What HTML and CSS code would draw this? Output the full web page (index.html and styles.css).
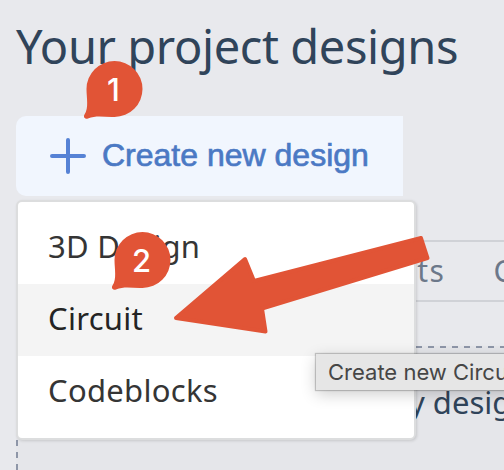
FILE: index.html
```
<!DOCTYPE html>
<html lang="en">
<head>
<meta charset="utf-8">
<title>Your project designs</title>
<link rel="stylesheet" href="styles.css">
</head>
<body>
<main class="page">
  <h1 class="title">Your project designs</h1>
  <button class="create">
    <svg class="plus" viewBox="0 0 36 36"><path d="M18 2v32M2 18h32"/></svg>
    <span>Create new design</span>
  </button>
  <nav class="tabs"><span>Circuits</span><span>Codeblocks</span></nav>
  <section class="empty"><p>my designs</p></section>
  <ul class="menu">
    <li>3D Design</li>
    <li class="active">Circuit</li>
    <li>Codeblocks</li>
  </ul>
  <div class="tooltip">Create new Circuit design</div>
  <svg class="arrow" viewBox="0 0 504 470"><path d="M176 318 L245 259 L254 281 L421 238 L427.500 258 L262 308.500 L265.500 331.500 Z"/></svg>
  <div class="marker first"><svg viewBox="0 0 60 60"><path d="M31.500 1A28 28 0 1 1 31.500 57C22 57.500 14 55 5 58.500C2 59.500 0 57 1.500 54.500C6 48 3.500 38 3.500 29A28 28 0 0 1 31.500 1Z"/></svg><span>1</span></div>
  <div class="marker second"><svg viewBox="0 0 60 60"><path d="M31.500 1A28 28 0 1 1 31.500 57C22 57.500 14 55 5 58.500C2 59.500 0 57 1.500 54.500C6 48 3.500 38 3.500 29A28 28 0 0 1 31.500 1Z"/></svg><span>2</span></div>
</main>
</body>
</html>
```
FILE: styles.css
```
* { box-sizing: border-box; }
body { margin: 0; font-family: "Noto Sans", sans-serif; }
.page {
  position: relative;
  width: 504px;
  height: 470px;
  padding: 15px 0 0 16px;
  overflow: hidden;
  background: #e8e9ed;
}
.title {
  height: 64px;
  margin: 0 0 37px;
  font-size: 47px;
  line-height: 62px;
  font-weight: 400;
  letter-spacing: -0.4px;
  white-space: nowrap;
  color: #30445a;
}
.create {
  display: flex;
  align-items: center;
  gap: 16px;
  width: 387px;
  height: 80px;
  padding: 0 0 2px 34px;
  border: 0;
  border-radius: 10px 0 0 10px;
  background: #f1f6fe;
  color: #4b79c4;
  font: 32px/40px "Liberation Sans", sans-serif;
  -webkit-text-stroke: 0.7px #4b79c4;
  white-space: nowrap;
}
.plus { width: 36px; height: 36px; flex: none; margin-top: 2px; }
.plus path { fill: none; stroke: #5682d5; stroke-width: 4; stroke-linecap: round; }
.tabs {
  display: flex;
  gap: 48px;
  height: 62px;
  margin-top: 44px;
  padding-left: 313px;
  border-top: 2px solid #d0d2d7;
  border-bottom: 2px solid #d0d2d7;
  font-size: 30px;
  line-height: 58px;
  letter-spacing: 1.5px;
  color: #6c788a;
}
.empty {
  width: 600px;
  height: 150px;
  margin-top: 44px;
  padding: 34px 0 0 364px;
  background:
    repeating-linear-gradient(90deg, #8e96a8 0 6px, transparent 6px 12px) 4px 0 / 100% 2px no-repeat,
    repeating-linear-gradient(180deg, #8e96a8 0 6px, transparent 6px 12px) 0 -2px / 2px 100% no-repeat,
    #e5e6ea;
}
.empty p { margin: 0; font-size: 31px; line-height: 44px; white-space: nowrap; color: #30445a; }
.menu {
  position: absolute;
  left: 16px;
  top: 200px;
  width: 400px;
  height: 240px;
  margin: 0;
  padding: 10px 0;
  border: 2px solid #dcddde;
  border-radius: 6px;
  background: #fff;
  box-shadow: 1px 1px 3px #0002;
  list-style: none;
}
.menu li {
  height: 72px;
  padding-left: 30px;
  font-size: 31px;
  line-height: 68px;
  letter-spacing: 0.3px;
  color: #353535;
}
.menu .active { background: #f4f4f4; color: #242424; }
.tooltip {
  position: absolute;
  left: 316px;
  top: 354px;
  width: 300px;
  height: 36px;
  padding-left: 12px;
  background: #e6e6e6;
  box-shadow: 0 0 1px 1px #0003, 0 4px 16px #0003;
  font: 22px/37px Inter, sans-serif;
  white-space: nowrap;
  color: #464646;
}
.arrow { position: absolute; left: 0; top: 0; width: 504px; height: 470px; }
.arrow path { fill: #e15436; stroke: #e15436; stroke-width: 4; stroke-linejoin: round; }
.marker { position: absolute; width: 60px; height: 60px; }
.marker svg { position: absolute; width: 60px; height: 60px; fill: #e15436; }
.marker span {
  position: relative;
  display: block;
  padding-left: 1px;
  font: 500 31px/60px Inter, sans-serif;
  text-align: center;
  color: #fff;
}
.first { left: 83px; top: 60px; }
.second { left: 111px; top: 231px; }
```
